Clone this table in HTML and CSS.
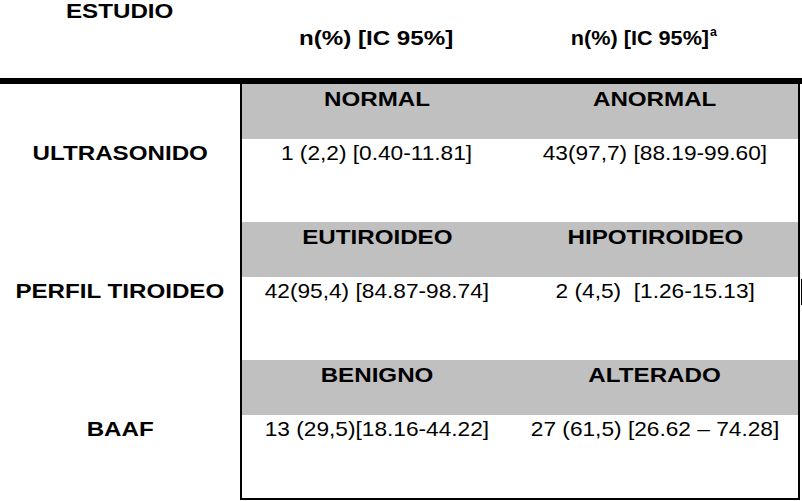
FILE: index.html
```html
<!DOCTYPE html>
<html lang="es">
<head>
<meta charset="utf-8">
<title>Tabla</title>
<link rel="stylesheet" href="styles.css">
</head>
<body>
<div class="page">
  <div class="head">
    <div class="h-label"><span class="t b">ESTUDIO</span></div>
    <div class="h-col"><span class="t b">n(%) [IC 95%]</span></div>
    <div class="h-col h-col2"><span class="t b narrow">n(%) [IC 95%]<sup>a</sup></span></div>
  </div>
  <div class="rule"></div>
  <div class="body">
    <div class="labels">
      <div class="label"><span class="t b">ULTRASONIDO</span></div>
      <div class="label"><span class="t b">PERFIL TIROIDEO</span></div>
      <div class="label"><span class="t b">BAAF</span></div>
    </div>
    <div class="box">
      <div class="sec">
        <div class="cats">
          <div class="cell"><span class="t b">NORMAL</span></div>
          <div class="cell"><span class="t b">ANORMAL</span></div>
        </div>
        <div class="vals">
          <div class="cell"><span class="t">1 (2,2) [0.40-11.81]</span></div>
          <div class="cell"><span class="t">43(97,7) [88.19-99.60]</span></div>
        </div>
      </div>
      <div class="sec">
        <div class="cats">
          <div class="cell"><span class="t b">EUTIROIDEO</span></div>
          <div class="cell"><span class="t b">HIPOTIROIDEO</span></div>
        </div>
        <div class="vals">
          <div class="cell"><span class="t">42(95,4) [84.87-98.74]</span></div>
          <div class="cell"><span class="t">2 (4,5)  [1.26-15.13]</span></div>
        </div>
      </div>
      <div class="sec">
        <div class="cats">
          <div class="cell"><span class="t b">BENIGNO</span></div>
          <div class="cell"><span class="t b">ALTERADO</span></div>
        </div>
        <div class="vals">
          <div class="cell"><span class="t">13 (29,5)[18.16-44.22]</span></div>
          <div class="cell"><span class="t">27 (61,5) [26.62 – 74.28]</span></div>
        </div>
      </div>
    </div>
  </div>
  <div class="caret"></div>
</div>
</body>
</html>
```
FILE: styles.css
```css
* { box-sizing: border-box; }
html, body { margin: 0; padding: 0; background: #fff; }
body {
  font-family: "Liberation Sans", Arial, sans-serif;
  font-size: 21px;
  line-height: 20px;
  color: #000;
}
.page {
  position: relative;
  width: 802px;
  height: 501px;
  overflow: hidden;
}
.t {
  display: inline-block;
  white-space: pre;
  transform: scaleX(1.08);
}
.t.b { transform: scaleX(1.15); }
.t.b.narrow { transform: scaleX(1.03); }
.b { font-weight: bold; }
.head {
  display: grid;
  grid-template-columns: 240px 272px 286px;
  height: 78px;
}
.h-label { text-align: center; padding-top: 1px; }
.h-col { text-align: center; padding-top: 28px; }
.h-col2 { padding-right: 22px; }
.h-col sup {
  font-size: 12px;
  line-height: 0;
  vertical-align: 9px;
  margin-left: 1px;
}
.rule {
  height: 6px;
  background: #000;
}
.body {
  display: flex;
}
.labels {
  width: 240px;
  display: flex;
  flex-direction: column;
}
.label {
  height: 138px;
  padding-top: 59px;
  text-align: center;
}
.box {
  width: 560px;
  border-left: 2px solid #000;
  border-right: 2px solid #000;
  border-bottom: 2px solid #000;
}
.sec {
  height: 138px;
  display: flex;
  flex-direction: column;
}
.cats, .vals {
  display: grid;
  grid-template-columns: 270px 286px;
}
.cats {
  height: 55px;
  background: #c0c0c0;
  padding-top: 5px;
}
.vals {
  height: 83px;
  padding-top: 4px;
}
.cell { text-align: center; }
.caret {
  position: absolute;
  left: 801px;
  top: 279px;
  width: 1px;
  height: 26px;
  background: #000;
}
```
